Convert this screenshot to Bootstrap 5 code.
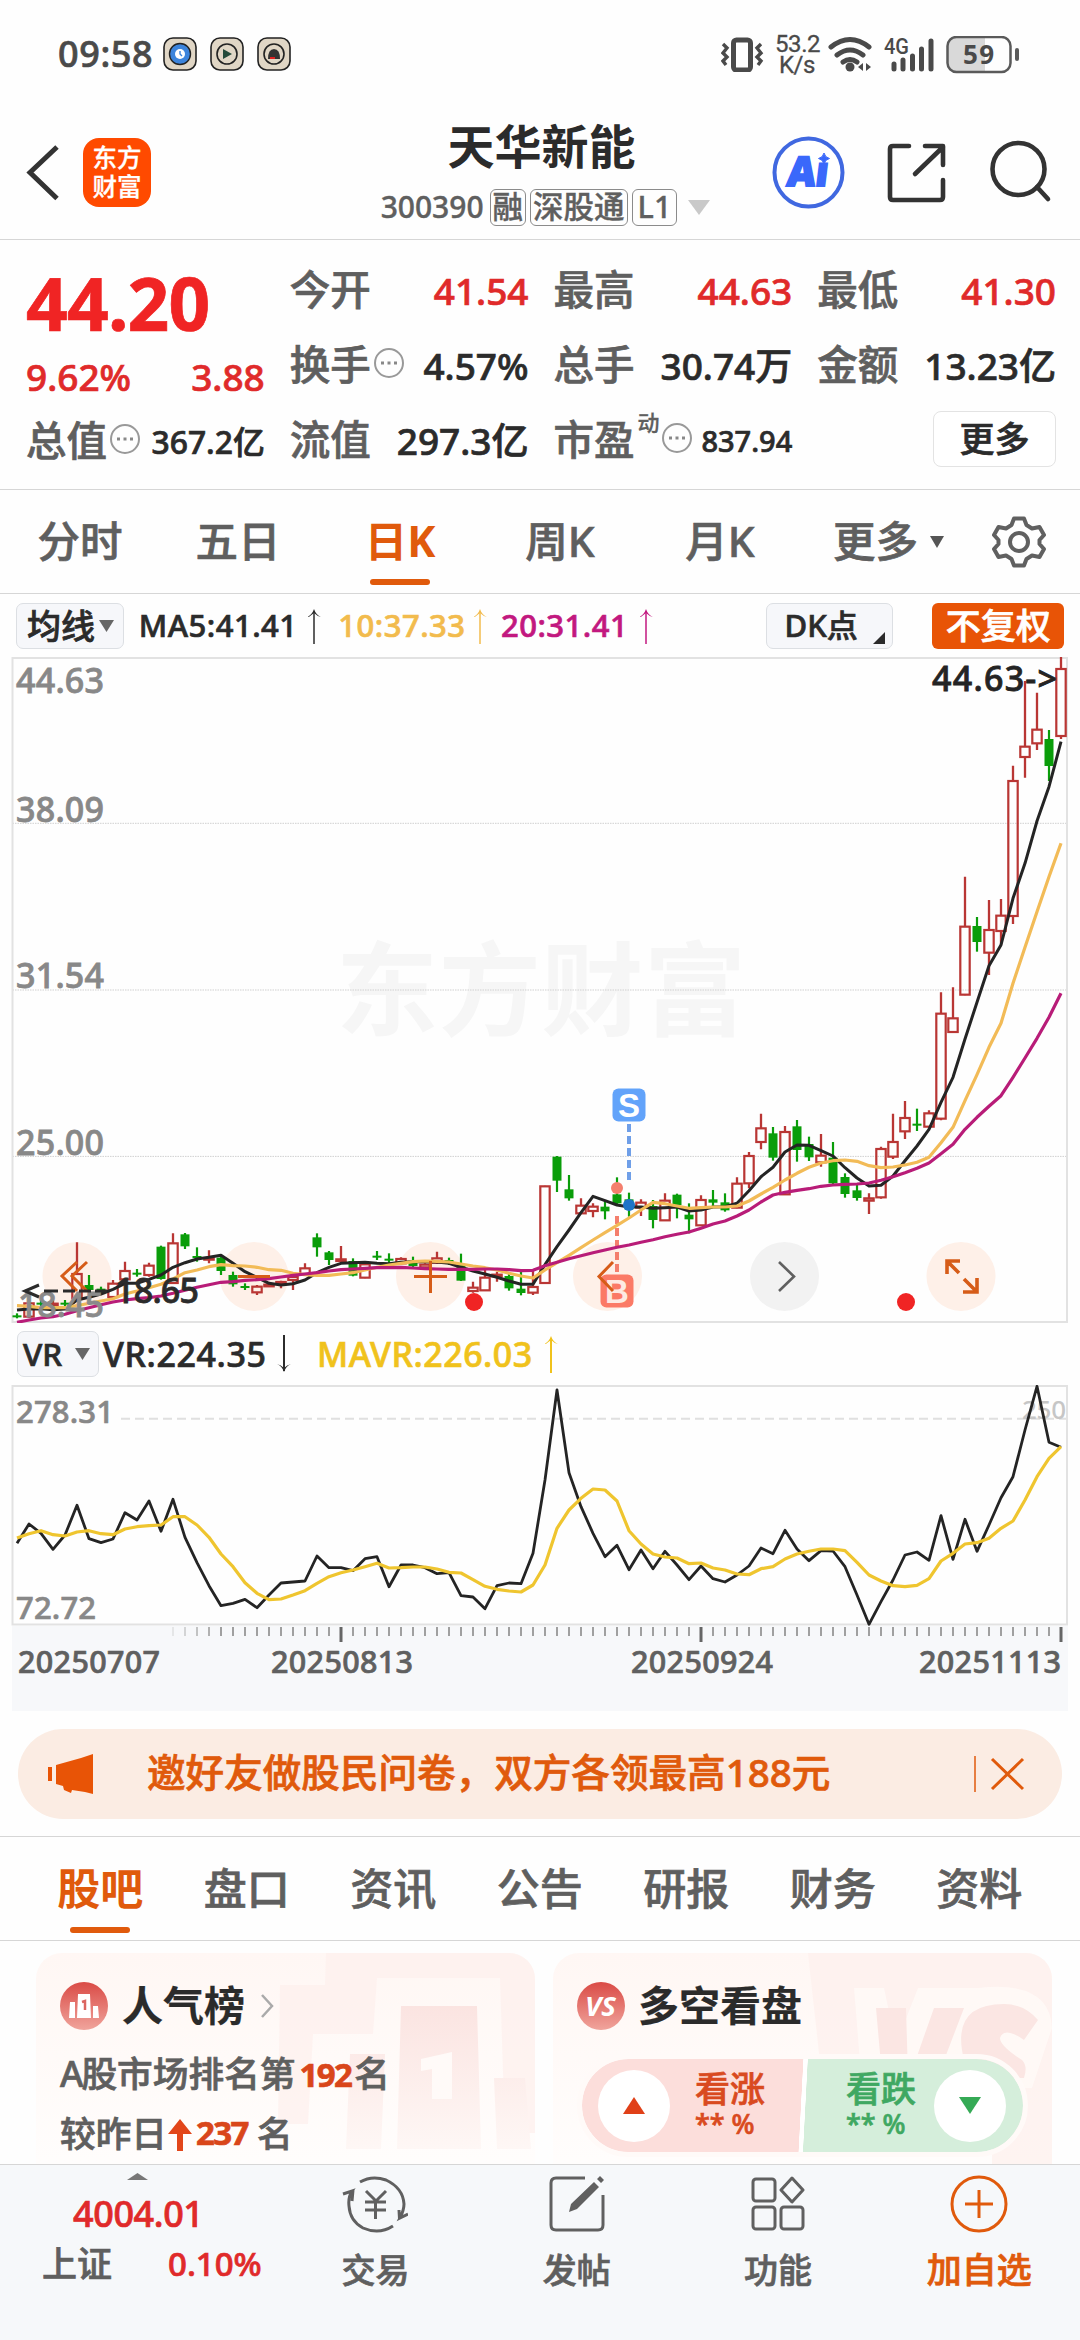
<!DOCTYPE html>
<html lang="zh-CN">
<head>
<meta charset="utf-8">
<meta name="viewport" content="width=device-width, initial-scale=1">
<title>天华新能 300390</title>
<link rel="stylesheet" href="https://cdn.jsdelivr.net/npm/bootstrap@5.3.0/dist/css/bootstrap.min.css">
<style>
:root{--ink:#2b2b2b;--grey:#5f5f5f;--up:#e02a2a;--brand:#e05a0c;--line:#d6d6d6}
html,body{margin:0;height:2340px;overflow:hidden}
body{width:1080px;background:#fefefe;color:var(--ink);font-family:"Noto Sans","Noto Sans CJK SC",sans-serif;font-weight:500;line-height:1;white-space:nowrap;-webkit-text-stroke:.7px currentColor}
svg{display:block;flex:none;-webkit-text-stroke:0}
svg text{font-family:"Noto Sans","Noto Sans CJK SC",sans-serif;font-weight:500}
.t-grey{color:var(--grey)} .t-up{color:var(--up)} .t-brand{color:var(--brand)}
.statusbar{height:105px;padding:36px 61px 0 58px;color:#4a4a4a}
.statusbar .clock{font-size:36px;line-height:36px;width:105px;letter-spacing:.6px}
.speed{font-family:Roboto,sans-serif;font-size:24px;line-height:21px;width:44px;font-weight:400;letter-spacing:-.4px;-webkit-text-stroke:.3px}
.topbar{height:135px;border-bottom:1px solid var(--line)}
.logo{width:68px;height:69px;border-radius:16px;background:#ff4a00;color:#fff;font-size:24.5px;line-height:29px;padding-top:5px;margin:33px 0 0 1px;-webkit-text-stroke:.3px}
.title-col{width:429px;margin-left:180px}
.stock-name{font-size:47px;line-height:56px;font-weight:700;margin:13px 8px 0 0;-webkit-text-stroke:0}
.stock-code{font-size:30px;height:38px;color:var(--grey);margin:14px 0 0;-webkit-text-stroke:.4px}
.tagbox{border:1.5px solid #8b8b8b;border-radius:6px;font-size:30.5px;line-height:33px;height:37px;padding:0 2px}
.quotes{height:250px;padding:13px 24px 0 26px;column-gap:25px;border-bottom:1px solid var(--line)}
.qcol{width:239px}
.qcell{height:75px;font-size:37px}
.qcell .qlabel{font-size:40.5px;color:var(--grey)}
.price{font-size:73px;font-weight:700;color:#f02424;letter-spacing:-.8px;height:84px;line-height:100px}
.chg{height:67px;font-size:37px;padding-top:12px}
.more-btn{width:123px;height:56px;border:1.5px solid #e3e3e3;border-radius:8px;font-size:35px;background:#fff;margin-top:-4px}
.period{height:104px;border-bottom:1px solid var(--line);font-size:42.5px;color:var(--grey)}
.tabitem{position:relative;height:100%}
.period .tabitem{width:160px}
.tabitem.on{color:var(--brand);font-weight:700;-webkit-text-stroke:0}
.tabitem.on::after{content:"";position:absolute;left:50%;margin-left:-30px;bottom:7px;width:60px;height:6px;border-radius:3px;background:var(--brand)}
.period .tabitem.on::after{bottom:8px}
.indic{height:63px;font-size:31px}
.ma{letter-spacing:.5px}
.chip{border:1.5px solid #dcdfe3;border-radius:7px;background:#f6f7fa;height:46px}
.banner{width:1044px;height:90px;margin:18px 0 0 18px;border-radius:45px;background:#fbece3;font-size:38.6px;padding:0 36px 0 29px}
.sections{height:105px;margin-top:17px;border-top:1px solid var(--line);border-bottom:1px solid var(--line);padding-left:27px;font-size:43px;color:var(--grey)}
.sections .tabitem{width:146.5px}
.deck{height:223px;padding:12px 28px 0 36px;gap:18px;overflow:hidden}
.panel{width:499px;height:260px;border-radius:26px;background:linear-gradient(#fff7f4,#fffdfc 80%);position:relative;overflow:hidden}
.panel .deco{position:absolute;right:0;top:0}
.panel-in{position:relative;padding:29px 24px}
.panel h2{font-size:41px;font-weight:700;margin:-2px 0 0;line-height:48px;-webkit-text-stroke:.2px}
.rankline{font-size:35.7px;line-height:58px;color:var(--grey)}
.rankline b{color:#d9461a;font-size:33px;letter-spacing:-1.6px}
.duel{width:441px;height:93px;border-radius:47px;outline:5px solid #fffaf8;overflow:hidden;margin:29px 0 0 5px;background:linear-gradient(93deg,#fcdedb 49.6%,#fff 49.7%,#fff 50.6%,#d5eedb 50.7%)}
.disc{width:72px;height:72px;border-radius:50%;background:#fff}
.duel .word{font-size:35px;line-height:36px}
.duel .pct{font-size:27px;line-height:34px}
.dock{height:176px;background:#f6f8fa;border-top:1px solid var(--line);color:var(--grey)}
.dock .idx{width:275px;padding-top:8px}
.dock .act{width:201.5px;font-size:34px;padding-top:10px}
.dock .act span{margin-top:19px;line-height:36px}
</style>
<script src="https://cdn.jsdelivr.net/npm/bootstrap@5.3.0/dist/js/bootstrap.bundle.min.js"></script>
</head>
<body>

<div class="statusbar d-flex align-items-start">
  <span class="clock">09:58</span>
  <svg width="130" height="36" viewBox="163 36 130 36">
    <g fill="#e0d6c5" stroke="#222" stroke-width="1.6"><rect x="164" y="38" width="32" height="32" rx="9"/><rect x="211" y="38" width="32" height="32" rx="9"/><rect x="258" y="38" width="32" height="32" rx="9"/></g>
    <circle cx="180" cy="54" r="10.5" fill="#3c84dc" stroke="#222" stroke-width="1.4"/><circle cx="180" cy="54" r="5" fill="#fff"/><path d="M180 51v3l2 2M176 49l-1 1M184 49l1 1" stroke="#3c84dc" fill="none" stroke-width="1.4"/>
    <g fill="none" stroke="#222" stroke-width="1.6"><circle cx="227" cy="54" r="10"/><circle cx="274" cy="54" r="10"/></g>
    <path d="M223 49l9 5-9 5z" fill="#244b3a"/><path d="M268 59q0-10 6-10t6 10z" fill="#333"/><path d="M270 58h5" stroke="#d22" stroke-width="2"/>
  </svg>
  <svg class="ms-auto" width="43" height="36" viewBox="721 35 43 36" fill="none" stroke="#4a4a4a"><rect x="733.500" y="39" width="17" height="30" rx="3" stroke-width="5"/><path d="M723 43l4 4-4 5 4 4-4 4 3 4M761 43l-4 4 4 5-4 4 4 4-3 4" stroke-width="3.4"/></svg>
  <div class="speed text-center" style="margin:-2px 9px 0 11px">53.2<br>K/s</div>
  <svg width="191" height="40" viewBox="827 35 191 40">
    <g fill="none" stroke="#4a4a4a" stroke-width="5" stroke-linecap="round"><path d="M830 46q19-15 38 0M836 54q13-10 26 0M842 61q7-5 14 0"/></g><circle cx="849" cy="66" r="4.500" fill="#4a4a4a"/><path d="M857 66l5-4v8zM870 66l-5-4v8z" fill="#4a4a4a"/>
    <text x="883" y="53" font-size="22" textLength="25" lengthAdjust="spacingAndGlyphs" style="font-family:Roboto;font-weight:500" fill="#4a4a4a">4G</text>
    <g stroke="#4a4a4a" stroke-width="5" stroke-linecap="round"><path d="M893 63v5M902 59v9M911.500 55v13M920.500 48v20M930 40v28"/></g>
    <path d="M950 37h34v33h-34q-3-2-3-8V45q0-6 3-8z" fill="#d9d9d9"/><rect x="946.500" y="36" width="63" height="35" rx="9" fill="none" stroke="#5a5a5a" stroke-width="2.500"/><text x="962" y="63" font-size="26" textLength="31" fill="#4a4a4a" style="font-weight:700">59</text><path d="M1016 49v9" stroke="#5a5a5a" stroke-width="4" stroke-linecap="round"/>
  </svg>
</div>

<div class="topbar d-flex">
  <svg width="82" height="80" viewBox="0 105 82 80" style="margin-top:27px"><path d="M57 120L30 145.500 57 171.500" fill="none" stroke="#333" stroke-width="5"/></svg>
  <div class="logo text-center">东方<br>财富</div>
  <div class="title-col d-flex flex-column align-items-center">
    <div class="stock-name">天华新能</div>
    <div class="stock-code d-flex align-items-center gap-1"><span style="margin-right:2px">300390</span><span class="tagbox">融</span><span class="tagbox">深股通</span><span class="tagbox" style="padding:0 5px">L1</span><svg width="22" height="15" style="margin-left:7px"><path d="M0 0h22L11 15z" fill="#c9c9c9"/></svg></div>
  </div>
  <svg width="310" height="90" viewBox="760 125 310 90" style="margin-top:20px">
    <circle cx="808.500" cy="172.500" r="34" fill="#fff" stroke="#4068e0" stroke-width="4"/>
    <text transform="translate(786 185.500) skewX(-7)" font-size="41" textLength="41" lengthAdjust="spacingAndGlyphs" style="font-weight:900" fill="#3a68fb" stroke="#3a68fb" stroke-width="1.800">Aı</text>
    <path d="M824 153q1 4.500 5.500 5.500-4.500 1-5.500 5.500-1-4.500-5.500-5.500 4.500-1 5.500-5.500z" fill="#3a68fb" stroke="#3a68fb"/>
    <g fill="none" stroke="#333" stroke-width="4.600" stroke-linecap="round" stroke-linejoin="round"><path d="M909 146H893q-3 0-3 3v48q0 3 3 3h47q3 0 3-3v-17M925 146h18v19M943 147l-28 27"/><circle cx="1018.500" cy="169" r="26"/><path d="M1037 187l11 12"/></g>
  </svg>
</div>

<div class="quotes d-flex">
  <div class="qcol">
    <div class="price">44.20</div>
    <div class="chg d-flex justify-content-between align-items-center t-up"><span>9.62%</span><span>3.88</span></div>
    <div class="qcell d-flex align-items-center"><span class="qlabel">总值</span><svg width="32" height="32" viewBox="0 0 32 32" style="margin:0 0 6px 2px"><g id="dots"><circle cx="16" cy="16" r="14" fill="none" stroke="#999" stroke-width="2"/><path d="M8 14.500h3v3H8zM14.500 14.500h3v3h-3zM21 14.500h3v3h-3z" fill="#888"/></g></svg><span class="ms-auto" style="font-size:31.800px">367.2亿</span></div>
  </div>
  <div class="qcol">
    <div class="qcell d-flex align-items-center justify-content-between"><span class="qlabel">今开</span><span class="t-up">41.54</span></div>
    <div class="qcell d-flex align-items-center"><span class="qlabel">换手</span><svg width="32" height="32" viewBox="0 0 32 32" style="margin:0 0 6px 2px"><use href="#dots"/></svg><span class="ms-auto">4.57%</span></div>
    <div class="qcell d-flex align-items-center justify-content-between"><span class="qlabel">流值</span><span>297.3亿</span></div>
  </div>
  <div class="qcol">
    <div class="qcell d-flex align-items-center justify-content-between"><span class="qlabel">最高</span><span class="t-up">44.63</span></div>
    <div class="qcell d-flex align-items-center justify-content-between"><span class="qlabel">总手</span><span>30.74万</span></div>
    <div class="qcell d-flex align-items-center"><span class="qlabel">市盈</span><span class="t-grey" style="font-size:22px;margin:-38px 1px 0 3px;-webkit-text-stroke:.3px">动</span><svg width="32" height="32" viewBox="0 0 32 32" style="margin-bottom:6px"><use href="#dots"/></svg><span class="ms-auto" style="font-size:29px">837.94</span></div>
  </div>
  <div class="qcol">
    <div class="qcell d-flex align-items-center justify-content-between"><span class="qlabel">最低</span><span class="t-up">41.30</span></div>
    <div class="qcell d-flex align-items-center justify-content-between"><span class="qlabel">金额</span><span>13.23亿</span></div>
    <div class="qcell d-flex align-items-center justify-content-end"><span class="more-btn d-flex align-items-center justify-content-center">更多</span></div>
  </div>
</div>

<div class="period d-flex">
  <div class="tabitem d-flex align-items-center justify-content-center">分时</div>
  <div class="tabitem d-flex align-items-center justify-content-center" style="padding-right:4px">五日</div>
  <div class="tabitem on d-flex align-items-center justify-content-center"><span>日K</span></div>
  <div class="tabitem d-flex align-items-center justify-content-center">周K</div>
  <div class="tabitem d-flex align-items-center justify-content-center">月K</div>
  <div class="tabitem d-flex align-items-center" style="padding-left:33px;width:191px">更多<svg width="14" height="12" style="margin-left:12px"><path d="M0 0h14L7 12z" fill="#555"/></svg></div>
  <div class="d-flex align-items-center"><svg width="56" height="56" viewBox="-28 -28 56 56" fill="none" stroke="#606060" stroke-width="4" stroke-linejoin="round"><path d="M-5-23.500H5L7.500-17 13-13.500 20.500-15 25-7 20.500-2V2L25 7 20.500 15 13 13.500 7.500 17 5 23.500H-5L-7.500 17-13 13.500-20.500 15-25 7-20.500 2V-2L-25-7-20.500-15-13-13.500-7.500-17z"/><circle r="9"/></svg></div>
</div>

<div class="indic d-flex align-items-center" style="padding:0 16px">
  <span class="chip d-flex align-items-center" style="width:108px;padding-left:10px;font-size:34px">均线<svg width="15" height="12" style="margin-left:4px"><path d="M0 0h15L7.500 12z" fill="#666"/></svg></span>
  <span class="ma" style="margin-left:15px;width:169px">MA5:41.41</span><svg width="14" height="36"><path d="M7 3v33" stroke="#2b2b2b" stroke-width="1.500"/><path d="M0 9q5-2 7-8 2 6 7 8-4-1-7-4-3 3-7 4z" fill="#2b2b2b"/></svg>
  <span class="ma" style="margin-left:17px;width:135px;color:#f2bb4d">10:37.33</span><svg width="14" height="36"><path d="M7 3v33" stroke="#f2bb4d" stroke-width="1.500"/><path d="M0 9q5-2 7-8 2 6 7 8-4-1-7-4-3 3-7 4z" fill="#f2bb4d"/></svg>
  <span class="ma" style="margin-left:14px;width:138px;color:#c2187f">20:31.41</span><svg width="14" height="36"><path d="M7 3v33" stroke="#c2187f" stroke-width="1.500"/><path d="M0 9q5-2 7-8 2 6 7 8-4-1-7-4-3 3-7 4z" fill="#c2187f"/></svg>
  <span class="chip d-flex align-items-center" style="width:128px;margin-left:113px;padding-left:18px">DK点<svg width="12" height="12" style="margin:24px 0 0 15px"><path d="M12 0v12H0z" fill="#2b2b2b"/></svg></span>
  <span class="d-flex align-items-center justify-content-center text-white rounded-2" style="background:#e85406;width:132px;height:46px;margin-left:39px;font-size:35px">不复权</span>
</div>

<svg id="kline" width="1080" height="666" viewBox="0 657 1080 666"></svg>

<div class="indic d-flex align-items-center" style="padding:0 17px;height:62px;font-size:34px">
  <span class="chip d-flex align-items-center" style="width:82px;padding-left:5px;font-size:31.500px">VR<svg width="15" height="12" style="margin-left:13px"><path d="M0 0h15L7.500 12z" fill="#666"/></svg></span>
  <span class="ma" style="margin-left:4px;width:174px;letter-spacing:.6px">VR:224.35</span><svg width="14" height="38"><path d="M7 0v36" stroke="#2b2b2b" stroke-width="2"/><path d="M0 29q5 2 7 8 2-6 7-8-4 1-7 4-3-3-7-4z" fill="#2b2b2b"/></svg>
  <span class="ma" style="margin-left:26px;width:227px;color:#f0c21c">MAVR:226.03</span><svg width="14" height="38"><path d="M7 3v35" stroke="#f0c21c" stroke-width="2"/><path d="M0 9q5-2 7-8 2 6 7 8-4-1-7-4-3 3-7 4z" fill="#f0c21c"/></svg>
</div>
<svg id="vr" width="1080" height="326" viewBox="0 1385 1080 326"></svg>

<div class="banner d-flex align-items-center t-brand">
  <svg width="46" height="40" viewBox="0 0 46 40" fill="#e85406"><path d="M1 13h4v14H1zM9 11L34 4 46 0v40l-8-2-13-2-1 3-7-3-1-4-7-2z"/></svg>
  <span style="margin:-4px 0 0 54px">邀好友做股民问卷，双方各领最高188元</span>
  <svg class="ms-auto" width="54" height="38" viewBox="0 0 54 38" fill="none" stroke="#e05a0c"><path d="M3 1v36" stroke-width="1.500"/><path d="M20 4l31 30M51 4L20 34" stroke-width="3"/></svg>
</div>

<div class="sections d-flex">
  <div class="tabitem on d-flex align-items-center justify-content-center">股吧</div>
  <div class="tabitem d-flex align-items-center justify-content-center">盘口</div>
  <div class="tabitem d-flex align-items-center justify-content-center">资讯</div>
  <div class="tabitem d-flex align-items-center justify-content-center">公告</div>
  <div class="tabitem d-flex align-items-center justify-content-center">研报</div>
  <div class="tabitem d-flex align-items-center justify-content-center">财务</div>
  <div class="tabitem d-flex align-items-center justify-content-center">资料</div>
</div>

<div class="deck d-flex">
  <div class="panel">
    <svg class="deco" width="260" height="211" viewBox="275 1953 260 211">
      <defs><linearGradient id="fade" x1="0" y1="0" x2="0" y2="1"><stop offset="0" stop-color="#fbe4e1"/><stop offset="1" stop-color="#fef7f5"/></linearGradient></defs>
      <path d="M326 1953h209v180h-30l-5-155H377l-4 56h-60l-5 90h-30l2-139h45z" fill="#fdefec" opacity=".7"/>
      <path d="M401 2006h76l4 143h-84zM350 2054h35l-4 95h-35zM494 2078h31l6 71h-34z" fill="url(#fade)"/>
      <path d="M421 2059l31-7v47h-20v-30l-11 2z" fill="#fffaf8"/>
    </svg>
    <div class="panel-in">
      <div class="d-flex align-items-center">
        <svg width="48" height="48" viewBox="0 0 48 48"><defs><linearGradient id="disc" x1="0" y1="0" x2="0" y2="1"><stop offset="0" stop-color="#da4b46"/><stop offset="1" stop-color="#f0a49c"/></linearGradient></defs><circle cx="24" cy="24" r="24" fill="url(#disc)"/><path d="M10 20h5v16H9zM18 12h12l1 24H17zM33 24h5l1 12h-6z" fill="#fff"/><path d="M22 20l3-1v9" fill="none" stroke="#dc6560" stroke-width="2.500"/></svg>
        <h2 style="margin-left:14px">人气榜</h2>
        <svg width="14" height="26" style="margin-left:15px"><path d="M2 2l10 11L2 24" fill="none" stroke="#aaa" stroke-width="2.500"/></svg>
      </div>
      <div class="rankline" style="margin-top:14px"><span style="letter-spacing:-2px">A</span>股市场排名第<b style="margin:0 3px 0 4px">192</b>名</div>
      <div class="rankline d-flex align-items-center">较昨日<svg width="24" height="34" style="margin:4px 4px 0 1px"><path d="M12 1L0 16h9v17h6V16h9z" fill="#e2461a"/></svg><b>237</b><span style="margin-left:9px">名</span></div>
    </div>
  </div>
  <div class="panel">
    <svg class="deco" width="260" height="211" viewBox="792 1953 260 211">
      <path d="M808 1953h244v211h-60V2080h-170z" fill="#fdefec" opacity=".7"/>
      <path d="M854 1988h30l12 56 22-56h60q72-8 74 40l-20 60h-170z" fill="#fffaf8" opacity=".8"/>
      <path d="M876 2008h30l2 68h-26zM934 2008h30l-26 68h-28zM1038 2020l-14 20q-20-14-24-2 0 8 22 22 6 6 2 18h-68l8-18q-14-56 40-56 20 0 34 16z" fill="#fbe6e3"/>
    </svg>
    <div class="panel-in">
      <div class="d-flex align-items-center">
        <svg width="48" height="48" viewBox="0 0 48 48"><circle cx="24" cy="24" r="24" fill="url(#disc)"/><text x="8" y="34" font-size="27" textLength="31" lengthAdjust="spacingAndGlyphs" fill="#fff" style="font-weight:700;font-style:italic">VS</text></svg>
        <h2 style="margin-left:13px">多空看盘</h2>
      </div>
      <div class="duel d-flex align-items-center">
        <span class="disc d-flex align-items-center justify-content-center" style="margin-left:16px"><svg width="24" height="19"><path d="M12 1l11 17H1z" fill="#e04018"/></svg></span>
        <div style="margin-left:25px;width:151px;color:#d94a20"><div class="word">看涨</div><div class="pct">** %</div></div>
        <div style="width:88px;color:#3fa862"><div class="word">看跌</div><div class="pct">** %</div></div>
        <span class="disc d-flex align-items-center justify-content-center"><svg width="24" height="19"><path d="M12 18L1 1h22z" fill="#35aa55"/></svg></span>
      </div>
    </div>
  </div>
</div>

<div class="dock d-flex">
  <div class="idx">
    <svg width="21" height="7" style="margin-left:127px"><path d="M0 7L10.500 0 21 7z" fill="#777"/></svg>
    <div class="t-up" style="font-size:36px;line-height:50px;margin:9px 0 0 73px;letter-spacing:-.4px">4004.01</div>
    <div class="d-flex align-items-center" style="font-size:35px;line-height:50px;padding:0 13px 0 42px"><span>上证</span><span class="t-up ms-auto" style="font-size:33px">0.10%</span></div>
  </div>
  <div class="act d-flex flex-column align-items-center"><svg width="66" height="58" viewBox="342 2175 66 58" fill="none" stroke="#606060" stroke-width="3"><path d="M360 2182q12-7 26-2 17 8 18 24 0 6-4 14l8-4M399.500 2219l-.5-9M393 2226q-14 9-30 2-13-7-14-22-1-9 3-15l-9 3M353 2190l-1 11"/><path d="M366 2191l10 10 10-10M365 2202h21M365 2210h21M375.500 2201v18"/></svg><span>交易</span></div>
  <div class="act d-flex flex-column align-items-center"><svg width="56" height="58" viewBox="0 0 56 58" fill="none" stroke="#606060" stroke-width="3"><path d="M36 3H7q-5 0-5 5v42q0 5 5 5h42q5 0 5-5V20"/><path d="M20 37l2-8L45 7l5 5-22 22zM48 4l3-3 4 4-3 3z" fill="#606060" stroke="none"/></svg><span>发帖</span></div>
  <div class="act d-flex flex-column align-items-center"><svg width="54" height="58" viewBox="0 0 54 58" fill="none" stroke="#606060" stroke-width="3"><rect x="2" y="4" width="22" height="22" rx="3"/><rect x="2" y="32" width="22" height="22" rx="3"/><rect x="30" y="32" width="22" height="22" rx="3"/><path d="M41 3l11 12-11 12-11-12z" stroke-linejoin="round"/></svg><span>功能</span></div>
  <div class="act d-flex flex-column align-items-center t-brand"><svg width="58" height="58" viewBox="0 0 58 58" fill="none" stroke="#e05a0c" stroke-width="3"><circle cx="29" cy="29" r="27"/><path d="M15 29h28M29 15v28"/></svg><span style="font-size:35px">加自选</span></div>
</div>

<script>
const X = i => 17 + 12 * i;
const poly = (ys, map, color, w) =>
  `<polyline fill="none" stroke="${color}" stroke-width="${w}" stroke-linejoin="round" points="${ys.map((y, i) => X(i) + ',' + map(y, i).toFixed(1)).join(' ')}"/>`;
/* Candles: colour, high, body top, body bottom, low, in thirds of a pixel from the base line */
const left = [
'g730 736 740 745','r695 700 740 743','g690 698 703 712','r690 701 706 715','g690 698 703 712','r517 612 685 690','g615 645 660 665','g650 656 661 668','r630 641 681 684','r575 603 628 640','g597 608 612 620','r578 587 615 620','g527 530 627 629','r490 520 639 641','g489 493 529 537','g532 558 562 575','r541 565 569 580','g560 563 603 615','g605 615 643 650','g640 648 652 660','r645 650 667 675','r640 644 649 651','r632 636 640 655','r615 621 630 660','r580 595 612 614','g490 502 532 560','g543 547 570 585','r528 568 573 578','g565 573 617 619','r577 583 623 625','g543 557 561 570','g550 566 570 580','r562 567 580 585','g560 572 588 592','r580 584 592 595','r545 565 578 582','g563 570 575 585','g551 582 632 633','r635 653 663 668','r598 623 661 663','r605 614 619 635','g610 618 655 662','g600 656 669 676','r598 651 668 675','r347 349 639 641','g258 260 332 366','g315 358 385 392','r385 407 430 432','r400 410 423 442','g390 410 424 448','g322 373 400 405','g368 388 418 440','r388 398 413 438','g390 408 450 475','r370 392 451 453','g371 374 405 445','g400 434 448 490','r376 390 466 468','g360 388 398 410'
];
const right = [
'g760 787 811 815','r712 731 803 805','r636 648 730 745','r521 565 606 628','g561 580 653 662','r558 576 763 765','g540 559 630 665','g590 612 652 663','r582 647 667 680','g606 653 730 733','g700 711 762 773','g733 751 774 782','r760 775 782 822','r620 627 772 776','r521 606 650 657','r483 534 574 597','g506 551 557 573','r511 520 560 562','r157 221 536 541','r142 235 276 278','r-190 -40 164 166','g-69 -42 6 35','r-120 -30 38 105','r-123 -73 -27 15','r-523 -477 -72 -48','r-777 -580 -549 -487','r-742 -631 -590 -570','g-630 -603 -522 -477','r-849 -813 -612 -603'
];
const candles = left.map(s => [s, 1070]).concat(right.map(s => [s, 940]));
let bars = '';
candles.forEach(([s, base], i) => {
  const v = s.slice(1).split(' ').map(n => base + n / 3), x = X(i);
  if (s[0] === 'g') bars += `<path d="M${x} ${v[0]}V${v[3]}" stroke="#0a9d0a" stroke-width="2.200"/><rect x="${x - 4.5}" y="${v[1]}" width="9" height="${Math.max(2, v[2] - v[1])}" fill="#0a9d0a"/>`;
  else bars += `<path d="M${x} ${v[0]}V${v[1]}M${x} ${v[2]}V${v[3]}" stroke="#b93634" stroke-width="2.300"/><rect x="${x - 4.7}" y="${v[1]}" width="9.400" height="${Math.max(1, v[2] - v[1])}" fill="none" stroke="#b93634" stroke-width="2.200"/>`;
});
const split = (y, i) => (i < 59 ? 1070 : 940) + y / 3;
const ma5 = [720,717,716,719,717,690,682,672,658,640,640,628,615,592,578,567,562,556,580,605,622,640,645,641,630,608,592,580,578,577,580,581,577,575,575,576,580,592,603,612,622,633,643,643,584,530,480,428,379,392,405,411,411,415,413,411,423,420,411,800,790,752,710,682,636,615,616,632,648,683,714,738,736,708,662,618,568,487,412,297,187,77,15,-125,-230,-357,-460,-595];
const ma10 = [707,709,713,713,713,707,700,693,686,672,663,653,643,627,608,600,590,584,587,588,592,599,601,610,614,616,616,612,608,600,592,585,580,575,573,574,576,582,588,593,600,610,618,624,600,578,556,533,510,488,466,444,420,397,401,408,415,413,411,801,798,783,762,742,720,700,682,669,662,660,664,677,683,681,675,667,652,608,562,482,404,322,250,130,22,-85,-190,-290];
const ma20 = [757,750,744,740,733,722,713,704,696,690,686,683,678,670,661,652,644,637,635,631,629,626,621,616,612,608,603,599,597,595,593,593,592,594,596,597,598,598,598,597,597,599,602,601,587,577,566,557,548,540,532,525,517,509,500,493,486,475,462,843,828,810,786,765,757,751,746,739,735,733,732,729,721,710,698,685,669,641,613,568,532,499,467,412,354,295,232,160];
const disc = (cx, fill) => `<circle cx="${cx}" cy="1276.400" r="34.500" fill="${fill}"/>`;
const label = (x, y, s, fill, len) => `<text x="${x}" y="${y}" font-size="34" fill="${fill}" stroke="${fill}" stroke-width=".800" textLength="${len}">${s}</text>`;
document.getElementById('kline').innerHTML = `
<text x="336" y="1028" font-size="102" fill="#f6f6f6" style="font-weight:700" textLength="410">东方财富</text>
<path d="M12.500 823.300H1067M12.500 990H1067M12.500 1156.400H1067" stroke="#d0d0d0" stroke-dasharray="1.500 1"/>
<rect x="12.500" y="658" width="1054.500" height="664" fill="none" stroke="#e2e2e2" stroke-width="2"/>
${disc(77, '#fef0e8')}${disc(254, '#fef0e8')}${disc(430.5, '#fef0e8')}${disc(607.5, '#fef0e8')}${disc(784.5, '#f2f2f2')}${disc(961, '#fef0e8')}
${bars}
<path d="M629 1124v58" stroke="#6f9fe8" stroke-width="4" stroke-dasharray="8 4"/>
<path d="M617 1216v58" stroke="#f47f6d" stroke-width="4" stroke-dasharray="8 4"/>
<rect x="600.500" y="1274.500" width="33" height="33" rx="6" fill="#fb7a66"/><text x="617" y="1303" font-size="33" text-anchor="middle" fill="#fdeae2" style="font-family:'Liberation Sans';font-weight:700">B</text>
<rect x="612.500" y="1088.500" width="33" height="33" rx="6" fill="#62a3fa"/><text x="629" y="1117" font-size="33" text-anchor="middle" fill="#fff" style="font-family:'Liberation Sans';font-weight:700">S</text>
${poly(ma5, split, '#242424', 3)}${poly(ma10, split, '#f2bb57', 3.2)}${poly(ma20, split, '#b81c78', 3.2)}
<circle cx="617" cy="1188" r="6" fill="#f47f6d"/><circle cx="629" cy="1205" r="6" fill="#1e74c8"/>
<circle cx="474" cy="1302" r="9" fill="#f02424"/><circle cx="906" cy="1302" r="9" fill="#f02424"/>
<g fill="none" stroke="#d65c18" stroke-width="3"><path d="M77 1262l-15 14 15 15M87 1262l-15 14 15 15M238 1276.500h32M414 1276.500h33M430.500 1261v32M613 1262l-14 14.500 14 14.500"/><path d="M960 1261h-13v13M947 1261l12 12M963 1292h14v-14M976 1291l-12-12" stroke-width="3.600"/></g>
<path d="M779 1262l15 14.500-15 14.500" fill="none" stroke="#606060" stroke-width="2.600"/>
${label(16, 693, '44.63', '#888', 88)}${label(16, 822, '38.09', '#888', 88)}${label(16, 988, '31.54', '#888', 88)}${label(16, 1155, '25.00', '#888', 88)}${label(18, 1317, '18.45', '#8a8a8a', 86)}
${label(115, 1303, '18.65', '#2b2b2b', 84)}
<path d="M39 1285l-14 6 14 6M44 1291h14M63 1291h12M79 1291h12M95 1291h12" fill="none" stroke="#2b2b2b" stroke-width="3"/>
${label(932, 691, '44.63-&gt;', '#242424', 125)}
`;

const vr = [670,612,640,688,645,556,656,668,657,578,600,543,634,538,652,728,797,857,850,838,863,825,789,786,783,708,743,743,752,716,710,800,735,735,743,761,758,827,831,866,797,789,791,700,480,210,458,560,640,710,676,749,690,746,694,735,779,738,776,786,765,738,684,701,631,687,722,692,693,740,825,913,845,780,705,696,721,587,718,598,694,615,533,470,330,199,367,382];
const mavr = [654,641,632,644,648,636,632,641,644,627,620,617,615,590,590,615,652,702,740,788,820,839,837,825,812,790,770,758,750,740,730,744,743,741,741,747,757,759,779,799,808,813,816,795,735,625,570,535,507,510,543,632,672,702,711,714,731,729,744,750,762,764,746,740,717,702,694,687,687,692,727,765,783,797,800,796,776,723,700,672,668,655,625,603,540,470,415,380];
const low = y => 1320 + y / 3;
let ticks = '';
for (let i = 13; i < 88; i++) {
  const major = i === 27 || i === 57 || i === 87;
  ticks += `<path d="M${X(i)} 1627V${major ? 1642 : 1636}" stroke="${major ? '#666' : '#8a8a8a'}" stroke-width="${major ? 3 : 1.6}" opacity="${i < 17 ? (i - 12) * .2 : 1}"/>`;
}
const date = (x, s) => `<text x="${x}" y="1673" font-size="30.500" fill="#606060" stroke="#606060" stroke-width=".700" textLength="142">${s}</text>`;
document.getElementById('vr').innerHTML = `
<rect x="12" y="1626" width="1056" height="85" fill="#f7f8fa"/>
<path d="M121 1418.700H1066" stroke="#e0e0e0" stroke-width="2" stroke-dasharray="9 5"/>
<rect x="12.500" y="1386" width="1054.500" height="238.500" fill="none" stroke="#e2e2e2" stroke-width="2"/>
<text x="1022" y="1419" font-size="26" fill="#c6c6c6" textLength="44">250</text>
<text x="16" y="1423" font-size="31" fill="#888" stroke="#888" stroke-width=".700" textLength="98">278.31</text>
<text x="16" y="1619" font-size="31" fill="#888" stroke="#888" stroke-width=".700" textLength="80">72.72</text>
${poly(vr, low, '#242424', 2.8)}${poly(mavr, low, '#efc52f', 3.2)}
${ticks}
${date(18, '20250707')}${date(271, '20250813')}${date(631, '20250924')}${date(919, '20251113')}
`;
</script>
</body>
</html>
